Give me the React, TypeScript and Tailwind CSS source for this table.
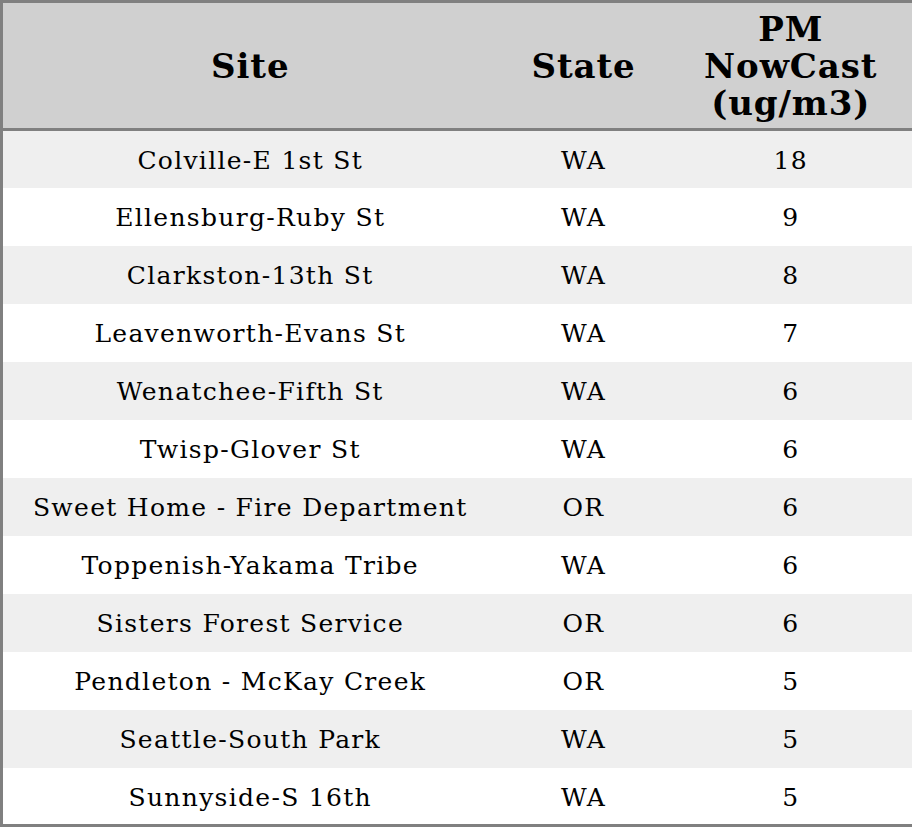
type Row = {
  site: string;
  state: string;
  pm: number;
};

const rows: Row[] = [
  { site: "Colville-E 1st St", state: "WA", pm: 18 },
  { site: "Ellensburg-Ruby St", state: "WA", pm: 9 },
  { site: "Clarkston-13th St", state: "WA", pm: 8 },
  { site: "Leavenworth-Evans St", state: "WA", pm: 7 },
  { site: "Wenatchee-Fifth St", state: "WA", pm: 6 },
  { site: "Twisp-Glover St", state: "WA", pm: 6 },
  { site: "Sweet Home - Fire Department", state: "OR", pm: 6 },
  { site: "Toppenish-Yakama Tribe", state: "WA", pm: 6 },
  { site: "Sisters Forest Service", state: "OR", pm: 6 },
  { site: "Pendleton - McKay Creek", state: "OR", pm: 5 },
  { site: "Seattle-South Park", state: "WA", pm: 5 },
  { site: "Sunnyside-S 16th", state: "WA", pm: 5 },
];

const App = () => {
  return (
    <div className="w-[912px] h-[827px] bg-white font-['DejaVu_Serif',serif] text-black">
      <table className="w-[912px] table-fixed border-collapse border-[3px] border-[#808080]">
        <colgroup>
          <col className="w-[496px]" />
          <col className="w-[172px]" />
          <col className="w-[244px]" />
        </colgroup>
        <thead>
          <tr className="h-[128px] bg-[#d0d0d0] border-b-[3px] border-[#808080]">
            <th className="text-[34px] leading-[37px] font-bold tracking-[0.9px] pt-[2px]">Site</th>
            <th className="text-[34px] leading-[37px] font-bold tracking-[0.9px] pt-[2px]">State</th>
            <th className="text-[34px] leading-[37px] font-bold tracking-[0.9px] pt-[2px]">
              PM
              <br />
              NowCast
              <br />
              (ug/m3)
            </th>
          </tr>
        </thead>
        <tbody>
          {rows.map((row, index) => (
            <tr key={index} className={index % 2 === 0 ? "h-[58px] bg-[#efefef]" : "h-[58px] bg-white"}>
              <td className="text-center text-[25px] tracking-[1.3px] pt-[3px]">{row.site}</td>
              <td className="text-center text-[25px] tracking-[1.3px] pt-[3px]">{row.state}</td>
              <td className="text-center text-[25px] tracking-[1.3px] pt-[3px]">{row.pm}</td>
            </tr>
          ))}
        </tbody>
      </table>
    </div>
  );
};

export default App;
